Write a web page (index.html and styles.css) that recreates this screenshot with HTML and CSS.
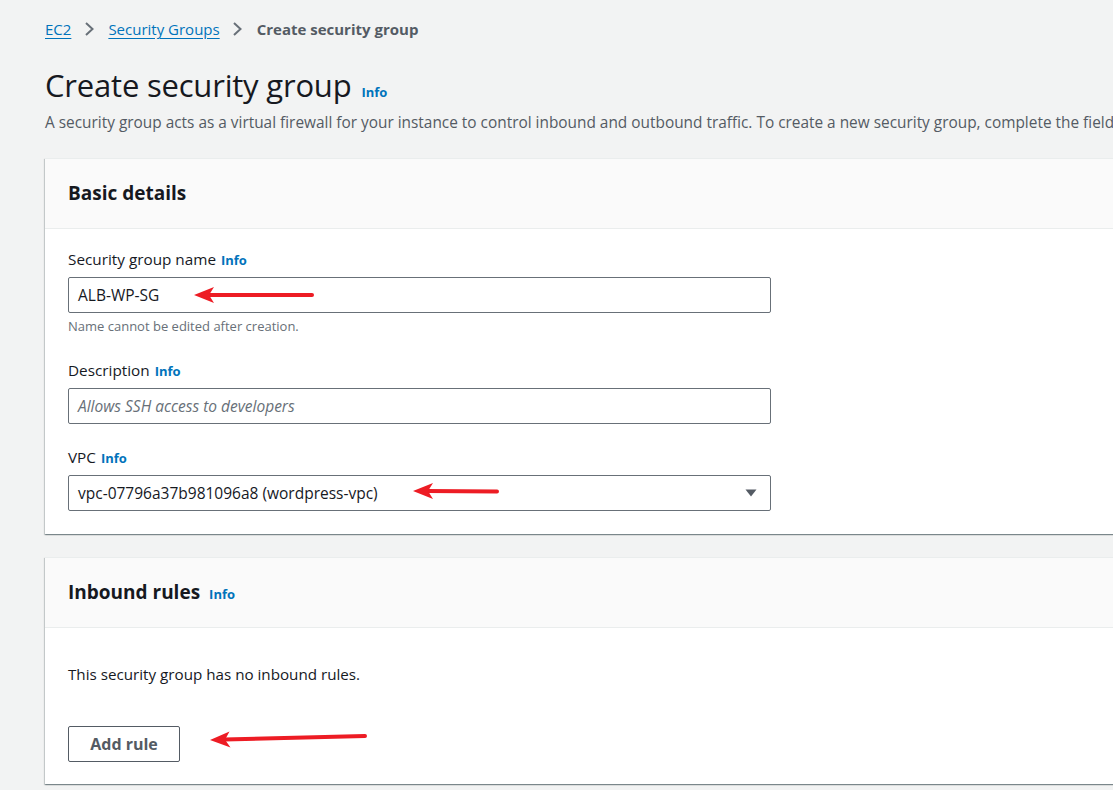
FILE: index.html
```html
<!DOCTYPE html>
<html>
<head>
<meta charset="utf-8">
<link rel="stylesheet" href="styles.css">
</head>
<body>
<div class="page">
  <nav class="crumbs">
    <a class="crumb-link" href="#">EC2</a>
    <svg class="chev chev1" width="12" height="16" viewBox="0 0 12 16"><path d="M3 2 L9.5 8 L3 14" fill="none" stroke="#687078" stroke-width="2"/></svg>
    <a class="crumb-link" href="#">Security Groups</a>
    <svg class="chev chev2" width="12" height="16" viewBox="0 0 12 16"><path d="M3 2 L9.5 8 L3 14" fill="none" stroke="#687078" stroke-width="2"/></svg>
    <span class="crumb-current">Create security group</span>
  </nav>

  <header class="page-head">
    <h1 class="title">Create security group <span class="info">Info</span></h1>
    <p class="subtitle">A security group acts as a virtual firewall for your instance to control inbound and outbound traffic. To create a new security group, complete the fields below.</p>
  </header>

  <section class="card">
    <div class="card-head"><h2 class="card-title">Basic details</h2></div>
    <div class="card-body">
      <div class="field">
        <label class="label">Security group name <span class="info-sm">Info</span></label>
        <div class="input">ALB-WP-SG</div>
        <div class="hint">Name cannot be edited after creation.</div>
        <svg class="arrow arrow1" width="124" height="18" viewBox="0 0 124 18"><path d="M14 9 L118 9" stroke="#ed1c24" stroke-width="4" stroke-linecap="round"/><path d="M0 9 L20 1 L15 9 L20 17 Z" fill="#ed1c24"/></svg>
      </div>
      <div class="field">
        <label class="label">Description <span class="info-sm">Info</span></label>
        <div class="input placeholder">Allows SSH access to developers</div>
      </div>
      <div class="field">
        <label class="label">VPC <span class="info-sm">Info</span></label>
        <div class="input select">
          <span>vpc-07796a37b981096a8 (wordpress-vpc)</span>
          <svg class="caret" width="12" height="8" viewBox="0 0 12 8"><path d="M0.5 0.5 H11.5 L6 7.5 Z" fill="#545b64"/></svg>
        </div>
        <svg class="arrow arrow2" width="90" height="18" viewBox="0 0 90 18"><path d="M14 9 L84 9.5" stroke="#ed1c24" stroke-width="4" stroke-linecap="round"/><path d="M0 9 L20 1 L15 9 L20 17 Z" fill="#ed1c24"/></svg>
      </div>
    </div>
  </section>

  <section class="card">
    <div class="card-head"><h2 class="card-title">Inbound rules <span class="info">Info</span></h2></div>
    <div class="card-body rules-body">
      <p class="empty">This security group has no inbound rules.</p>
      <div class="btn-row">
        <button class="btn">Add rule</button>
        <svg class="arrow arrow3" width="160" height="20" viewBox="0 0 160 20"><path d="M14 11.5 L155 8" stroke="#ed1c24" stroke-width="4" stroke-linecap="round"/><path d="M0 12 L19.5 3.5 L15 11.8 L20.5 19.5 Z" fill="#ed1c24"/></svg>
      </div>
    </div>
  </section>
</div>
</body>
</html>
```

FILE: styles.css
```css
html, body {
  margin: 0;
  padding: 0;
  overflow: hidden;
  background: #f2f3f3;
}
body {
  font-family: "Open Sans", "Noto Sans", "Liberation Sans", sans-serif;
  color: #16191f;
  width: 1113px;
  height: 790px;
}
.page {
  width: 1250px;
  padding: 17px 0 0 45px;
}
.crumbs {
  display: flex;
  align-items: center;
  font-size: 15px;
  line-height: 24px;
}
.crumb-link {
  color: #0073bb;
  text-decoration: underline;
  text-underline-offset: 3px;
}
.chev1 {
  margin: 0 13px 0 12px;
}
.chev2 {
  margin: 0 14px 0 11px;
}
.crumb-current {
  color: #545b64;
  font-weight: 700;
}
.page-head {
  margin-top: 24px;
}
.title {
  margin: 0;
  display: flex;
  align-items: baseline;
  font-size: 31px;
  font-weight: 400;
  line-height: 40px;
  height: 40px;
  color: #16191f;
  letter-spacing: -0.2px;
}
.info {
  font-size: 13px;
  font-weight: 700;
  color: #0073bb;
  margin-left: 10px;
  letter-spacing: 0;
  line-height: 1;
}
.subtitle {
  margin: 7px 0 0 0;
  font-size: 15.4px;
  line-height: 22px;
  color: #545b64;
  white-space: nowrap;
}
.card {
  margin-top: 24px;
  background: #fff;
  box-shadow: 0 1px 1px 0 rgba(0,28,36,.3), 1px 1px 1px 0 rgba(0,28,36,.15), -1px 1px 1px 0 rgba(0,28,36,.15);
  border-top: 1px solid #eaeded;
}
.card + .card {
  margin-top: 23px;
}
.card-head {
  box-sizing: border-box;
  background: #fafafa;
  border-bottom: 1px solid #eaeded;
  height: 70px;
  display: flex;
  align-items: center;
  padding: 0 0 2px 23px;
}
.card-title {
  margin: 0;
  display: flex;
  align-items: baseline;
  font-size: 19px;
  font-weight: 700;
  line-height: 24px;
  color: #16191f;
}
.card-title .info {
  margin-left: 9px;
}
.card-body {
  padding: 19px 23px 23px;
}
.field {
  display: flow-root;
  position: relative;
  width: 703px;
  margin-bottom: 22px;
}
.field:last-child {
  margin-bottom: 0;
}
.label {
  display: block;
  font-size: 15.3px;
  line-height: 22px;
  color: #16191f;
  margin-bottom: 6px;
}
.info-sm {
  font-size: 13px;
  font-weight: 700;
  color: #0073bb;
  margin-left: 1px;
}
.input {
  box-sizing: border-box;
  height: 36px;
  border: 1px solid #687078;
  border-radius: 2px;
  padding: 0 9px;
  font-size: 15.5px;
  line-height: 34px;
  color: #16191f;
}
.placeholder {
  font-style: italic;
  color: #687078;
}
.select {
  display: flex;
  justify-content: space-between;
  align-items: center;
  padding-right: 13px;
}
.caret {
  display: block;
}
.hint {
  font-size: 13px;
  line-height: 18px;
  color: #687078;
  margin: 4px 0 2px;
}
.arrow {
  position: absolute;
  display: block;
}
.arrow1 {
  left: 126px;
  top: 38px;
}
.arrow2 {
  left: 345px;
  top: 36px;
}
.rules-body {
  padding: 35px 23px 22px;
}
.empty {
  margin: 0;
  font-size: 15.2px;
  line-height: 22px;
  color: #16191f;
}
.btn-row {
  position: relative;
  margin-top: 41px;
  height: 36px;
}
.btn {
  box-sizing: border-box;
  height: 36px;
  width: 112px;
  background: #fff;
  border: 1px solid #545b64;
  border-radius: 2px;
  font-family: inherit;
  font-size: 16px;
  font-weight: 700;
  color: #545b64;
  padding: 0;
}
.arrow3 {
  left: 142px;
  top: 2px;
}
```
